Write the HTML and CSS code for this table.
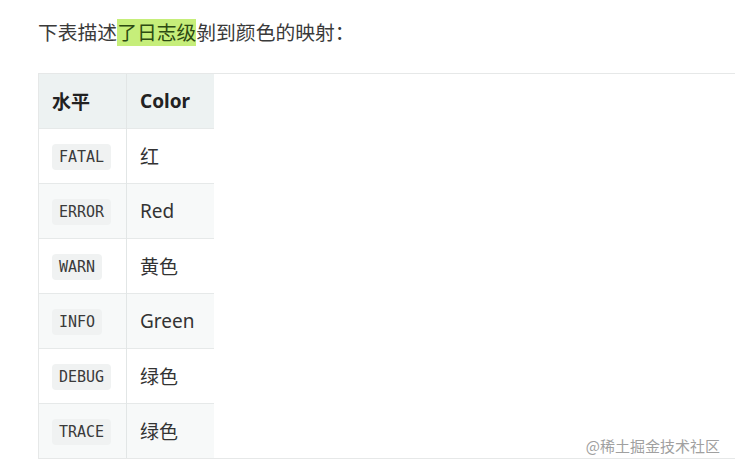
FILE: index.html
```html
<!DOCTYPE html>
<html lang="zh-CN">
<head>
    <meta charset="UTF-8">
    <meta name="viewport" content="width=device-width, initial-scale=1.0">
    <title>日志级别颜色</title>
    <link rel="stylesheet" href="styles.css">
</head>
<body>
    <div class="article">
        <p class="intro">下表描述<span class="mark">了日志级</span>剝到颜色的映射：</p>

        <div class="table-wrap">
            <table class="level-table">
                <thead>
                    <tr>
                        <th class="col-level">水平</th>
                        <th class="col-color">Color</th>
                    </tr>
                </thead>
                <tbody>
                    <tr><td><code>FATAL</code></td><td>红</td></tr>
                    <tr><td><code>ERROR</code></td><td>Red</td></tr>
                    <tr><td><code>WARN</code></td><td>黄色</td></tr>
                    <tr><td><code>INFO</code></td><td>Green</td></tr>
                    <tr><td><code>DEBUG</code></td><td>绿色</td></tr>
                    <tr><td><code>TRACE</code></td><td>绿色</td></tr>
                </tbody>
            </table>
        </div>
    </div>
    <div class="watermark">@稀土掘金技术社区</div>
</body>
</html>
```

FILE: styles.css
```css
html, body {
    margin: 0;
    overflow: hidden;
}
body {
    font-family: "Noto Sans", "Noto Sans CJK SC", sans-serif;
    color: #333;
    background: #fff;
    width: 735px;
    height: 471px;
    position: relative;
}
.article {
    padding: 18px 0 0 38px;
}
.intro {
    margin: 0;
    font-size: 19.8px;
    line-height: 29px;
    color: #3a3a3a;
}
.mark {
    background-color: #c6ee7a;
    color: #2c4a12;
}
.table-wrap {
    margin-top: 26px;
    width: 696px;
    border-top: 1px solid #e6e8e8;
    border-bottom: 1px solid #e6e8e8;
    border-left: 1px solid #e6e8e8;
}
.level-table {
    border-collapse: collapse;
}
.level-table th,
.level-table td {
    height: 54px;
    padding: 0 0 0 13px;
    text-align: left;
    font-size: 19px;
    border-top: 1px solid #e6e9e9;
    border-right: 1px solid #e2e6e6;
}
.level-table th {
    border-top: none;
    font-weight: 700;
    background-color: #edf2f2;
    color: #222;
}
.level-table td:last-child,
.level-table th:last-child {
    border-right: none;
}
.col-level {
    width: 74px;
}
.col-color {
    width: 74px;
}
.level-table tbody tr:nth-child(even) td {
    background-color: #f7f9f9;
}
.level-table code {
    display: inline-block;
    font-family: "DejaVu Sans Mono", monospace;
    font-size: 15px;
    line-height: 26px;
    padding: 0 7px;
    border-radius: 4px;
    background-color: #f0f2f2;
    color: #3a3a3a;
}
.watermark {
    position: absolute;
    right: 15px;
    top: 435px;
    font-size: 15px;
    color: #a0a0a0;
    font-family: "Noto Sans CJK SC", sans-serif;
}
```
